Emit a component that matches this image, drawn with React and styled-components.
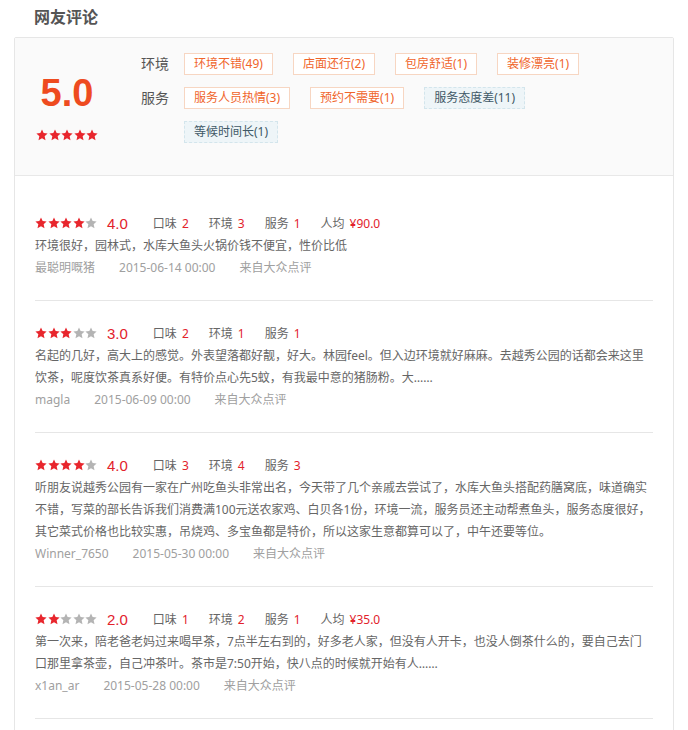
import React from 'react';
import styled, { createGlobalStyle } from 'styled-components';

const GlobalStyle = createGlobalStyle`
  body {
    margin: 0;
    background: #fff;
    font-family: "Noto Sans", "Noto Sans CJK SC", sans-serif;
    color: #666;
  }
`;

const summaryGroups = [
  {
    label: '环境',
    tags: [
      { text: '环境不错(49)' },
      { text: '店面还行(2)' },
      { text: '包房舒适(1)' },
      { text: '装修漂亮(1)' },
    ],
  },
  {
    label: '服务',
    tags: [
      { text: '服务人员热情(3)' },
      { text: '预约不需要(1)' },
      { text: '服务态度差(11)', bad: true },
      { text: '等候时间长(1)', bad: true },
    ],
  },
];

const reviews = [
  {
    stars: 4,
    score: '4.0',
    items: [['口味', '2'], ['环境', '3'], ['服务', '1'], ['人均', '¥90.0']],
    text: '环境很好，园林式，水库大鱼头火锅价钱不便宜，性价比低',
    user: '最聪明嘅猪',
    date: '2015-06-14 00:00',
  },
  {
    stars: 3,
    score: '3.0',
    items: [['口味', '2'], ['环境', '1'], ['服务', '1']],
    text: '名起的几好，高大上的感觉。外表望落都好靓，好大。林园feel。但入边环境就好麻麻。去越秀公园的话都会来这里饮茶，呢度饮茶真系好便。有特价点心先5蚊，有我最中意的猪肠粉。大……',
    user: 'magla',
    date: '2015-06-09 00:00',
  },
  {
    stars: 4,
    score: '4.0',
    items: [['口味', '3'], ['环境', '4'], ['服务', '3']],
    text: '听朋友说越秀公园有一家在广州吃鱼头非常出名，今天带了几个亲戚去尝试了，水库大鱼头搭配药膳窝底，味道确实不错，写菜的部长告诉我们消费满100元送农家鸡、白贝各1份，环境一流，服务员还主动帮煮鱼头，服务态度很好，其它菜式价格也比较实惠，吊烧鸡、多宝鱼都是特价，所以这家生意都算可以了，中午还要等位。',
    user: 'Winner_7650',
    date: '2015-05-30 00:00',
  },
  {
    stars: 2,
    score: '2.0',
    items: [['口味', '1'], ['环境', '2'], ['服务', '1'], ['人均', '¥35.0']],
    text: '第一次来，陪老爸老妈过来喝早茶，7点半左右到的，好多老人家，但没有人开卡，也没人倒茶什么的，要自己去门口那里拿茶壶，自己冲茶叶。茶市是7:50开始，快八点的时候就开始有人……',
    user: 'x1an_ar',
    date: '2015-05-28 00:00',
  },
];

function Star({ on, size = 12 }) {
  return (
    <StarSvg width={size} height={size} viewBox="0 0 24 24" $on={on}>
      <polygon points="12,1 15.3,8.2 23.2,9 17.3,14.4 19,22.3 12,18.3 5,22.3 6.7,14.4 0.8,9 8.7,8.2" />
    </StarSvg>
  );
}

function Stars({ count }) {
  return (
    <StarRow>
      {[0, 1, 2, 3, 4].map((i) => (
        <Star key={i} on={i < count} />
      ))}
    </StarRow>
  );
}

function App() {
  return (
    <Page>
      <GlobalStyle />
      <Title>网友评论</Title>
      <Panel>
        <Summary>
          <ScoreBox>
            <BigScore>5.0</BigScore>
            <ScoreStars>
              <Stars count={5} />
            </ScoreStars>
          </ScoreBox>
          <Groups>
            {summaryGroups.map((g) => (
              <Group key={g.label}>
                <GroupLabel>{g.label}</GroupLabel>
                <TagList>
                  {g.tags.map((t) => (
                    <Tag key={t.text} $bad={t.bad}>{t.text}</Tag>
                  ))}
                </TagList>
              </Group>
            ))}
          </Groups>
        </Summary>

        <ReviewList>
          {reviews.map((r) => (
            <Review key={r.date}>
              <ReviewHead>
                <Stars count={r.stars} />
                <ReviewScore>{r.score}</ReviewScore>
                {r.items.map(([label, value]) => (
                  <HeadItem key={label}>
                    {label}
                    <HeadValue>{value}</HeadValue>
                  </HeadItem>
                ))}
              </ReviewHead>
              <ReviewText>{r.text}</ReviewText>
              <Meta>
                <span>{r.user}</span>
                <span>{r.date}</span>
                <span>来自大众点评</span>
              </Meta>
            </Review>
          ))}
        </ReviewList>
      </Panel>
    </Page>
  );
}

const Page = styled.div`
  padding: 6px 14px 0;
`;

const Title = styled.h3`
  margin: 0 0 9px;
  padding-left: 20px;
  font-size: 16px;
  line-height: 22px;
  font-weight: bold;
  color: #555;
`;

const Panel = styled.div`
  border: 1px solid #e6e6e6;
  border-radius: 2px;
`;

const Summary = styled.div`
  display: flex;
  box-sizing: border-box;
  height: 138px;
  padding-top: 15px;
  background: #fafafa;
  border-bottom: 1px solid #e8e8e8;
`;

const ScoreBox = styled.div`
  width: 104px;
  margin-right: 22px;
  padding-top: 21px;
  text-align: center;
`;

const BigScore = styled.div`
  font-family: "Liberation Sans", Arial, sans-serif;
  font-size: 38px;
  line-height: 38px;
  font-weight: bold;
  color: #ee4b1f;
`;

const ScoreStars = styled.div`
  display: flex;
  justify-content: center;
  margin-top: 17px;
`;

const Groups = styled.div`
  display: flex;
  flex-direction: column;
  gap: 12px;
`;

const Group = styled.div`
  display: flex;
  align-items: flex-start;
`;

const GroupLabel = styled.span`
  width: 43px;
  flex-shrink: 0;
  font-size: 14px;
  line-height: 22px;
  color: #555;
`;

const TagList = styled.div`
  display: flex;
  flex-wrap: wrap;
  gap: 12px 20px;
  width: 420px;
`;

const Tag = styled.span`
  box-sizing: border-box;
  height: 22px;
  padding: 0 9px;
  font-size: 12px;
  line-height: 20px;
  white-space: nowrap;
  color: ${(p) => (p.$bad ? '#3f5866' : '#f0652b')};
  background: ${(p) => (p.$bad ? '#eef5f8' : '#fff')};
  border: 1px ${(p) => (p.$bad ? 'dashed #d3e5ec' : 'solid #f7d6c2')};
`;

const ReviewList = styled.div`
  padding: 15px 20px 20px;
`;

const Review = styled.div`
  padding: 20px 0 21px;
  border-bottom: 1px solid #e6e6e6;
`;

const ReviewHead = styled.div`
  display: flex;
  align-items: center;
  height: 24px;
`;

const StarRow = styled.div`
  display: flex;
  gap: 0.5px;
`;

const StarSvg = styled.svg`
  display: block;
  fill: ${(p) => (p.$on ? '#e8262d' : '#b4b4b4')};
`;

const ReviewScore = styled.span`
  margin: 0 5px 0 10px;
  font-family: "Liberation Sans", Arial, sans-serif;
  font-size: 15px;
  color: #e2222c;
`;

const HeadItem = styled.span`
  margin-left: 20px;
  font-size: 12px;
  color: #666;
`;

const HeadValue = styled.span`
  margin-left: 5px;
  color: #e2222c;
`;

const ReviewText = styled.p`
  margin: 0;
  width: 618px;
  font-size: 12px;
  line-height: 22px;
  color: #666;
`;

const Meta = styled.div`
  display: flex;
  gap: 24px;
  font-size: 12px;
  line-height: 22px;
  color: #a0a0a0;
`;

export default App;
